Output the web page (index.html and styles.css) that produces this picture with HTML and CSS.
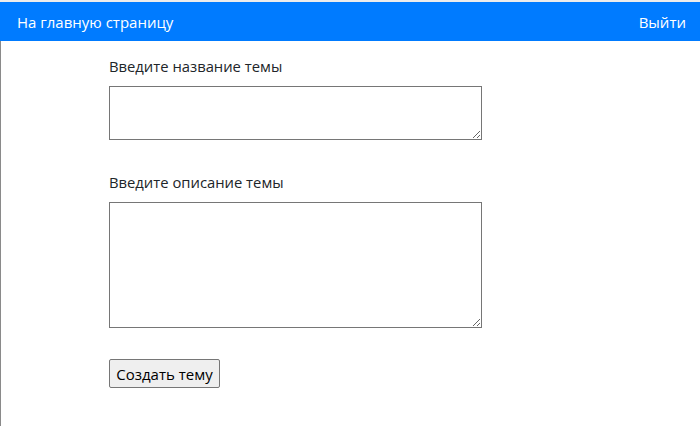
FILE: index.html
```html
<!DOCTYPE html>
<html lang="ru">
<head>
<meta charset="utf-8">
<link rel="stylesheet" href="styles.css">
</head>
<body>
<div class="page">
  <nav class="navbar">
    <a class="nav-link" href="#">На главную страницу</a>
    <a class="nav-link" href="#">Выйти</a>
  </nav>
  <main class="content">
    <form class="topic-form">
      <label class="field">
        <span class="field-label">Введите название темы</span>
        <textarea class="input-title"></textarea>
      </label>
      <label class="field">
        <span class="field-label">Введите описание темы</span>
        <textarea class="input-desc"></textarea>
      </label>
      <div class="actions">
        <button type="button" class="btn">Создать тему</button>
      </div>
    </form>
  </main>
</div>
</body>
</html>
```

FILE: styles.css
```css
html, body {
  margin: 0;
  padding: 0;
  height: 100%;
  background: #fff;
}
body {
  font-family: "Open Sans", "Noto Sans", sans-serif;
  font-size: 14.8px;
  color: #212529;
}
.page {
  display: flex;
  flex-direction: column;
  height: 100%;
  border-top: 2px solid #ececec;
  box-sizing: border-box;
}
.navbar {
  height: 39px;
  background: #007bff;
  display: flex;
  align-items: center;
  justify-content: space-between;
  padding: 0 14px 0 17px;
  flex-shrink: 0;
}
.nav-link {
  color: #fff;
  text-decoration: none;
  font-size: 15px;
}
.content {
  flex: 1;
  border-left: 1px solid #8a8a8a;
  padding: 15px 0 0 108px;
}
.topic-form {
  display: flex;
  flex-direction: column;
  gap: 32px;
}
.field {
  display: flex;
  flex-direction: column;
  align-items: flex-start;
}
.field-label {
  margin-bottom: 10px;
  line-height: 20px;
}
textarea {
  display: block;
  width: 373px;
  box-sizing: border-box;
  border: 1px solid #767676;
  border-radius: 0;
  margin: 0;
  font-family: inherit;
}
.input-title {
  height: 54px;
}
.input-desc {
  height: 126px;
}
.actions {
  display: flex;
  margin-top: -1px;
}
.btn {
  font-family: inherit;
  font-size: 15px;
  color: #000;
  background: #efefef;
  border: 1px solid #767676;
  border-radius: 2px;
  height: 29px;
  width: 111px;
  padding: 0;
}
```
